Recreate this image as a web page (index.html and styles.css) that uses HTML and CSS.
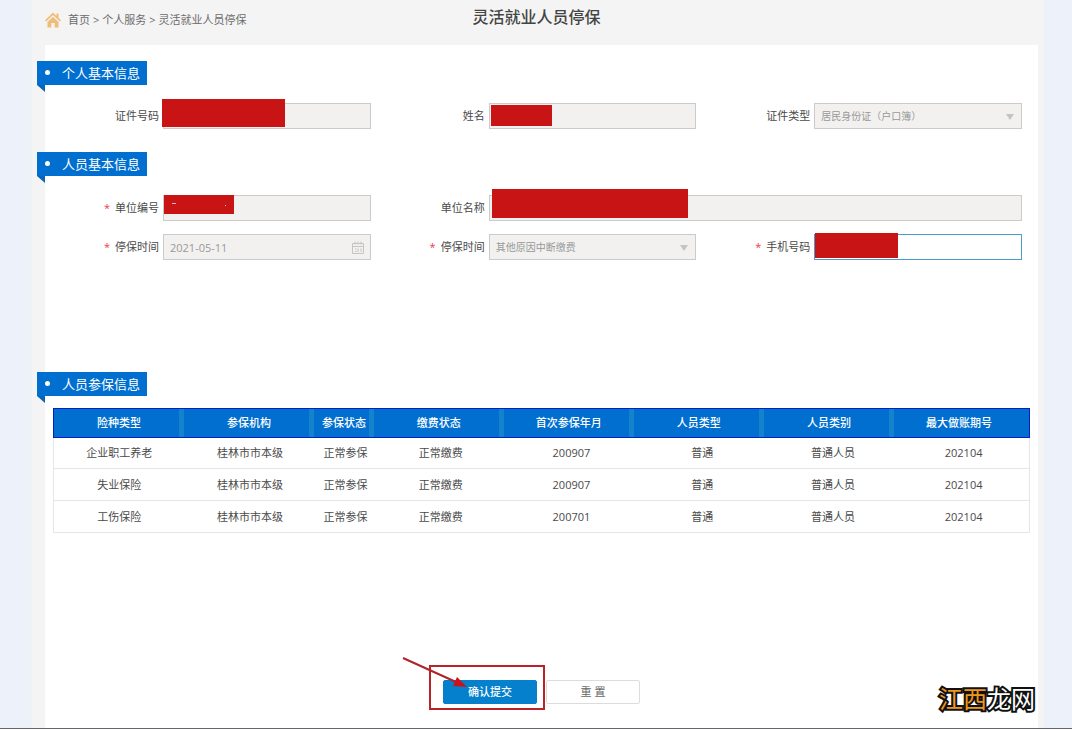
FILE: index.html
```html
<!DOCTYPE html>
<html lang="zh-CN">
<head>
<meta charset="utf-8">
<title>灵活就业人员停保</title>
<link rel="stylesheet" href="styles.css">
</head>
<body>
<div class="page">
  <header class="header">
    <nav class="crumbs" aria-label="位置">
      <svg class="home" viewBox="0 0 16 16" aria-hidden="true"><path d="M8 .5 11.500 4V1.500h2V6L16 8.300 14.800 9.500 8 3 1.200 9.500 0 8.300Z"/><path d="M8 4.700 13.500 10v5.500H9.700V11H6.300v4.500H2.500V10Z"/></svg>
      <a href="#">首页</a><span>&gt;</span><a href="#">个人服务</a><span>&gt;</span><a href="#">灵活就业人员停保</a>
    </nav>
    <h1 class="title">灵活就业人员停保</h1>
  </header>

  <main class="panel">
    <section class="person">
      <h2 class="tag">个人基本信息</h2>
      <div class="fields">
        <div class="field">
          <label for="idno">证件号码</label>
          <div class="control"><input id="idno" type="text" disabled><span class="mask mask-id"></span></div>
        </div>
        <div class="field">
          <label for="name">姓名</label>
          <div class="control"><input id="name" type="text" disabled><span class="mask mask-name"></span></div>
        </div>
        <div class="field">
          <label for="idtype">证件类型</label>
          <div class="control"><select id="idtype" disabled><option>居民身份证（户口簿）</option></select><span class="caret"></span></div>
        </div>
      </div>
    </section>

    <section class="staff">
      <h2 class="tag">人员基本信息</h2>
      <div class="fields">
        <div class="field">
          <label for="unitno"><b class="req">*</b>单位编号</label>
          <div class="control"><input id="unitno" type="text" disabled><span class="mask mask-unitno"></span></div>
        </div>
        <div class="field wide">
          <label for="unit">单位名称</label>
          <div class="control"><input id="unit" type="text" disabled><span class="mask mask-unit"></span></div>
        </div>
        <div class="field">
          <label for="date"><b class="req">*</b>停保时间</label>
          <div class="control"><input id="date" type="text" value="2021-05-11" disabled>
            <svg class="calendar" viewBox="0 0 12 13" aria-hidden="true"><path d="M.5 12.500V2.500h11v10zM.5 5.500h11M3 .5v3M6 .5v3M9 .5v3M3 8h1.500M3 10.500h1.500M6 7.500v3.500M9 7.500v3.500"/></svg>
          </div>
        </div>
        <div class="field">
          <label for="reason"><b class="req">*</b>停保时间</label>
          <div class="control"><select id="reason" disabled><option>其他原因中断缴费</option></select><span class="caret"></span></div>
        </div>
        <div class="field">
          <label for="phone"><b class="req">*</b>手机号码</label>
          <div class="control"><input id="phone" class="active" type="text"><span class="mask mask-phone"></span></div>
        </div>
      </div>
    </section>

    <section class="insured">
      <h2 class="tag">人员参保信息</h2>
      <table class="grid">
        <thead>
          <tr><th>险种类型</th><th>参保机构</th><th>参保状态</th><th>缴费状态</th><th>首次参保年月</th><th>人员类型</th><th>人员类别</th><th>最大做账期号</th></tr>
        </thead>
        <tbody>
          <tr><td>企业职工养老</td><td>桂林市市本级</td><td>正常参保</td><td>正常缴费</td><td>200907</td><td>普通</td><td>普通人员</td><td>202104</td></tr>
          <tr><td>失业保险</td><td>桂林市市本级</td><td>正常参保</td><td>正常缴费</td><td>200907</td><td>普通</td><td>普通人员</td><td>202104</td></tr>
          <tr><td>工伤保险</td><td>桂林市市本级</td><td>正常参保</td><td>正常缴费</td><td>200701</td><td>普通</td><td>普通人员</td><td>202104</td></tr>
        </tbody>
      </table>
    </section>

    <div class="actions">
      <div class="submit">
        <button class="btn primary" type="button">确认提交</button>
        <span class="frame"></span>
        <svg class="arrow" viewBox="0 0 66 34" aria-hidden="true"><path class="shaft" d="M1 2 54 26"/><path class="head" d="M65 31 51 30 55 21Z"/></svg>
      </div>
      <button class="btn" type="button">重 置</button>
    </div>
  </main>
</div>
<div class="brand"><span>江西</span>龙网</div>
</body>
</html>
```

FILE: styles.css
```css
* { box-sizing: border-box; }

body {
  margin: 0;
  min-height: 100vh;
  display: flex;
  position: relative;
  border-bottom: 1px solid #65656a;
  background: #ecf1fa;
  color: #4a4a4a;
  font: 11px/16px "Open Sans", "Noto Sans CJK SC", sans-serif;
}

.page {
  flex: 1;
  display: flex;
  flex-direction: column;
  margin: 0 28px 0 24px;
  padding: 0 6px 0 21px;
  background: linear-gradient(90deg, #ecf2f7 8px, #f4f4f4 8px);
}

.header {
  display: grid;
  grid-template-columns: 1fr auto 1fr;
  height: 45px;
  padding-top: 6px;
  margin-left: -10px;
}

.crumbs {
  display: flex;
  align-items: center;
  gap: 3px;
  height: 28px;
  padding-left: 10px;
  color: #6c6c6c;
}
.crumbs a { color: inherit; text-decoration: none; }
.home { width: 16px; height: 16px; margin-right: 4px; fill: #f0bd78; }

.title {
  margin: 0;
  font-size: 16px;
  line-height: 22px;
  font-weight: 500;
  color: #444;
}

.panel {
  flex: 1;
  padding-top: 16px;
  background: #fff;
}

.tag {
  position: relative;
  width: 110px;
  margin: 0 0 0 -8px;
  padding-left: 25px;
  background: #006fd0;
  color: #fff;
  font-size: 13px;
  line-height: 24px;
  font-weight: 400;
}
.tag::before {
  content: "";
  position: absolute;
  left: 8px;
  top: 9px;
  width: 5px;
  height: 5px;
  border-radius: 50%;
  background: #fff;
}
.tag::after {
  content: "";
  position: absolute;
  left: 0;
  top: 100%;
  border-style: solid;
  border-width: 0 8px 7px 0;
  border-color: transparent #0866b8 transparent transparent;
}

.staff { margin-top: 23px; }
.insured { margin-top: 112px; }

.fields {
  display: grid;
  grid-template-columns: repeat(3, 1fr);
  gap: 13px 0;
  margin: 18px 16px 0 0;
}
.staff .fields { margin-top: 19px; }
.field {
  display: grid;
  grid-template-columns: 118px 1fr;
  align-items: center;
}
.wide { grid-column: span 2; }
.field label {
  padding: 0 4px 1px 0;
  text-align: right;
}
.req { margin-right: 5px; color: #e8404a; font-weight: 400; }

.control { position: relative; height: 26px; }
.control input,
.control select {
  display: block;
  width: 100%;
  height: 26px;
  margin: 0;
  padding: 0 6px;
  border: 1px solid #cbcbcb;
  border-radius: 0;
  background: #f2f1f0;
  color: #999;
  opacity: 1;
  appearance: none;
  font: inherit;
}
.control select { font-size: 10px; }
.control input.active { border-color: #4b9cc6; background: #fff; }

.caret {
  position: absolute;
  right: 8px;
  top: 11px;
  border-style: solid;
  border-width: 6px 4px 0;
  border-color: #c4c4c4 transparent transparent;
}
.calendar {
  position: absolute;
  right: 7px;
  top: 7px;
  width: 12px;
  height: 13px;
  fill: none;
  stroke: #c4c4c4;
}

.mask { position: absolute; background: #c81414; }
.mask-id { left: -1px; top: -4px; width: 123px; height: 28px; }
.mask-name { left: 2px; top: 2px; width: 61px; height: 21px; }
.mask-unitno { left: 1px; top: 0; width: 70px; height: 19px; }
.mask-unitno::before,
.mask-unitno::after {
  content: "";
  position: absolute;
  left: 8px;
  top: 8px;
  width: 4px;
  height: 1px;
  background: #f0b4b4;
}
.mask-unitno::after { left: 61px; top: 10px; width: 1px; }
.mask-unit { left: 3px; top: -6px; width: 196px; height: 29px; }
.mask-phone { left: 1px; top: -1px; width: 83px; height: 25px; }

.grid {
  display: block;
  margin: 12px 8px 0;
  text-align: center;
}
.grid thead,
.grid tbody { display: block; }
.grid tr {
  display: grid;
  grid-template-columns: 131fr 131fr 60fr repeat(5, 131fr);
}
.grid thead tr {
  padding-right: 5px;
  border: 1px solid #0a1fc0;
  background: #006fd0;
}
.grid th,
.grid td { padding: 0; }
.grid th {
  color: #fff;
  font-weight: 500;
  line-height: 28px;
}
.grid th:not(:last-child) {
  background: linear-gradient(#1583cc, #1583cc) right / 5px 100% no-repeat;
}
.grid tbody tr {
  border: 1px solid #e6e6e6;
  border-top: 0;
}
.grid td { line-height: 31px; }
.grid tbody tr:first-child td { line-height: 30px; }

.actions {
  display: flex;
  justify-content: center;
  gap: 9px;
  margin-top: 147px;
}
.submit { position: relative; }
.btn {
  display: block;
  width: 94px;
  height: 24px;
  padding: 0;
  border: 1px solid #dcdcdc;
  border-radius: 2px;
  background: #fff;
  color: #666;
  font: inherit;
}
.primary { border-color: #0480cc; background: #0480cc; color: #fff; font-weight: 500; }
.frame {
  position: absolute;
  left: -14px;
  top: -15px;
  width: 116px;
  height: 45px;
  border: 2px solid #b8232a;
  pointer-events: none;
}
.arrow {
  position: absolute;
  left: -41px;
  top: -24px;
  width: 66px;
  height: 34px;
  pointer-events: none;
}
.shaft { fill: none; stroke: #b0242b; stroke-width: 2; }
.head { fill: #c8141c; }

.brand {
  position: absolute;
  right: 37px;
  bottom: 11px;
  color: #fff;
  font-size: 24px;
  line-height: 36px;
  font-weight: 400;
  -webkit-text-stroke: 4px #111;
  paint-order: stroke fill;
}
.brand span { color: #ee961e; }
```
